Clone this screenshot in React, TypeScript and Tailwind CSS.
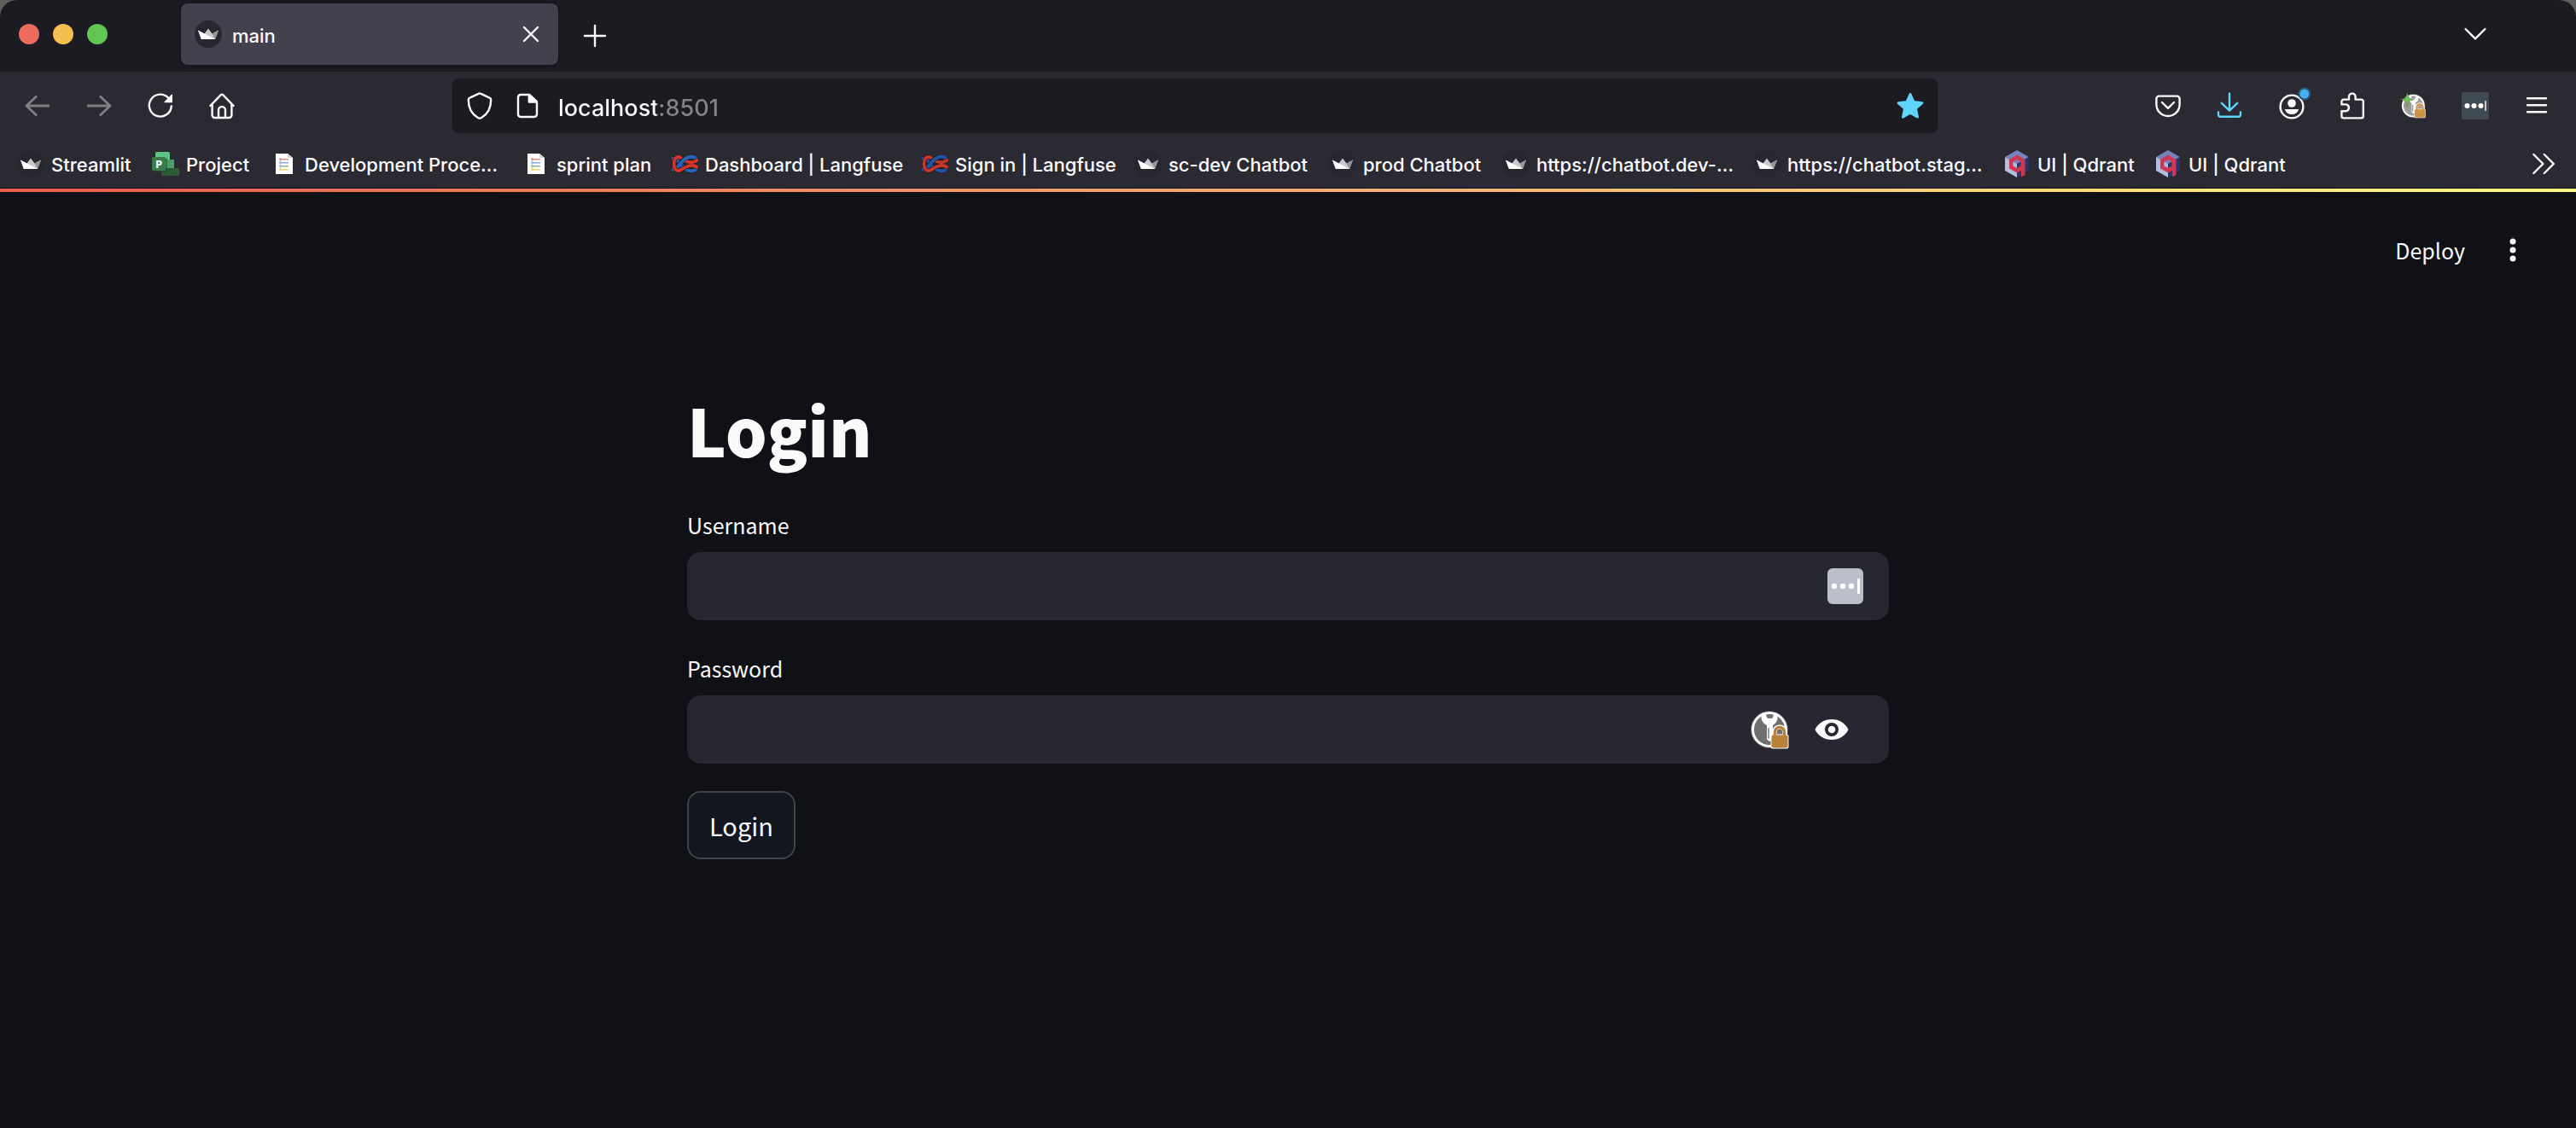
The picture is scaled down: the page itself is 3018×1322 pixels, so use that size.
import React, { useState } from "react";

type IconProps = { className?: string };

const line = {
  fill: "none",
  stroke: "currentColor",
  strokeWidth: 1.4,
  strokeLinecap: "round" as const,
  strokeLinejoin: "round" as const,
};

const Svg16 = ({ className = "size-8", children }: IconProps & { children: React.ReactNode }) => (
  <svg viewBox="0 0 16 16" className={className + " shrink-0 overflow-visible"} aria-hidden="true" {...line}>
    {children}
  </svg>
);

const Crown = () => (
  <svg viewBox="0 0 32 32" className="size-8 shrink-0" aria-hidden="true">
    <circle cx="16" cy="16" r="16" fill="#262730" />
    <path d="M4 11.5 11.5 15.5 16 9.5 20.5 15.5 28 11.5 24 22H8Z" fill="#c9c9cb" />
    <path d="M20.5 15.5 28 11.5 24 22Z" fill="#939398" />
    <path d="M4 11.5 24 22H8.5a.9.9 0 0 1-.8-.5Z" fill="#fff" />
  </svg>
);

const ProjectIcon = () => (
  <svg viewBox="0 0 32 32" className="size-8 shrink-0" aria-hidden="true">
    <rect x="4" y="2" width="17" height="14" rx="1.5" fill="#5fc387" />
    <rect x="15" y="11" width="11" height="14" rx="1" fill="#4a9f68" />
    <rect x="11" y="21" width="21" height="9" rx="1.5" fill="#2b5c36" />
    <rect x="1" y="9" width="17" height="17" rx="1.5" fill="#1f4a2a" opacity=".5" />
    <rect x="0" y="8" width="16" height="16" rx="1.5" fill="#377d48" />
    <text x="8" y="20.5" textAnchor="middle" fill="#fff" fontFamily="Open Sans, sans-serif" fontWeight="700" fontSize="13">
      P
    </text>
  </svg>
);

const DocIcon = () => (
  <svg viewBox="0 0 32 32" className="size-8 shrink-0" aria-hidden="true">
    <path d="M6 4h14l6 5v19H6Z" fill="#fff" />
    <path d="M20 4v5h6Z" fill="#d8d8d8" />
    {["#e0907f", "#8aa6ee", "#86b98c", "#f2cf7a"].map((c, i) => (
      <g key={c} fill={c}>
        <circle cx="11.5" cy={10.5 + i * 4} r="1.5" />
        <rect x="11" y={10 + i * 4} width="10" height="1.5" />
      </g>
    ))}
    <path d="M11.5 12v9" stroke="#b9c3d8" strokeWidth=".8" />
  </svg>
);

const KnotIcon = ({ soft = false }: { soft?: boolean }) => {
  const blue = soft ? "#24509f" : "#2a62b4";
  const red = soft ? "#c7352b" : "#d8352a";
  const blueLoop = "M1 22.500C6 23 9 19 12 15 16 9 21 7.500 25 7.700 28 8 29.500 10 29.500 12M29.500 20C29.500 22 28 24 25 24.300 20 24.500 16 22 13 18 9 12 6 9.500 1 9.500";
  const redLoop = "M31.500 10.500C29 14.500 23 14.500 19 13.500 14 12 13 8 9 8 5 8 3.500 12 3.500 16 3.500 20 5 24 9 24 13 24 14 20.500 19 19 23 17.700 28 17.500 31.500 20.500";
  return (
    <svg viewBox="0 0 32 32" className="size-8 shrink-0" aria-hidden="true" fill="none">
      <path d={blueLoop} stroke="#15161c" strokeWidth="5.500" />
      <path d={blueLoop} stroke={blue} strokeWidth="4.200" />
      <path d={redLoop} stroke="#15161c" strokeWidth="5" />
      <path d={redLoop} stroke={red} strokeWidth="3.800" />
      <path d="M11 16.300C14 11.500 16 9.700 19 8.700" stroke="#15161c" strokeWidth="5.500" />
      <path d="M10.500 17C14 11.500 16 9.700 20 8.400" stroke={blue} strokeWidth="4.200" />
    </svg>
  );
};

const QdrantIcon = () => (
  <svg viewBox="0 0 32 32" className="size-8 shrink-0" aria-hidden="true">
    <path d="M16 0 30 8 16 16 2 8Z" fill="#7584bc" />
    <path d="M2 8 16 16V32L2 24Z" fill="#b3bde1" />
    <path d="M30 8 16 16V32L30 24Z" fill="#2a3567" />
    <path d="M16 5.500 25.500 11V29L21 31.500V24L16 26.500 7 21.500V11Z" fill="#cf3650" />
    <path d="M16 11 20.500 13.500 16 16 11.500 13.500Z" fill="#7584bc" />
    <path d="M11.500 13.500 16 16V21L11.500 18.500Z" fill="#b3bde1" />
    <path d="M20.500 13.500 16 16V21L20.500 18.500Z" fill="#2a3567" />
  </svg>
);

const KeyLock = ({ className = "size-11", spark = false }: IconProps & { spark?: boolean }) => (
  <svg viewBox="0 0 44 44" className={className + " shrink-0 overflow-visible"} aria-hidden="true">
    <circle cx="21" cy="22" r="22" fill="#55555b" />
    <circle cx="21" cy="22" r="19.500" fill={spark ? "#9c9c9c" : "#6f6f6f"} stroke="#fff" strokeWidth="3" />
    <path d="M12 4.500h5.500v2.500a3 3 0 0 0 3 2h2a3 3 0 0 0 3-2V4.500H30c1.500 6-.5 10-5 12.500v16l-4 3-3-2.500V17c-5-2.500-7.500-6.500-6-12.500Z" fill="#fff" />
    <path d="M20 20v12.500" stroke="#777" strokeWidth="1.500" />
    <path d="M27 29v-4a6 6 0 0 1 12 0v4" fill="none" stroke="#fff" strokeWidth="5.500" />
    <rect x="22.500" y="27.500" width="21" height="17" rx="2.500" fill="#fff" />
    <rect x="23.500" y="28.500" width="19" height="15" rx="2" fill={spark ? "#cf9243" : "#b9823a"} />
    <path d="M27.500 30v-5a5.500 5.500 0 0 1 11 0v5" fill="none" stroke={spark ? "#cf9243" : "#b9823a"} strokeWidth="3.500" />
    {spark && (
      <path d="M10-2 13 7.500 22.500 10.500 13 13.500 10 23 7 13.500-2.500 10.500 7 7.500Z" fill="#6fc455" stroke="#35552f" strokeWidth=".6" />
    )}
  </svg>
);

const bookmarks: { label: string; icon: React.ReactNode; width: string }[] = [
  { label: "Streamlit", icon: <Crown />, width: "w-[158px]" },
  { label: "Project", icon: <ProjectIcon />, width: "w-[139px]" },
  { label: "Development Proce…", icon: <DocIcon />, width: "w-[295px]" },
  { label: "sprint plan", icon: <DocIcon />, width: "w-[174px]" },
  { label: "Dashboard | Langfuse", icon: <KnotIcon />, width: "w-[293px]" },
  { label: "Sign in | Langfuse", icon: <KnotIcon soft />, width: "w-[250px]" },
  { label: "sc-dev Chatbot", icon: <Crown />, width: "w-[228px]" },
  { label: "prod Chatbot", icon: <Crown />, width: "w-[203px]" },
  { label: "https://chatbot.dev-…", icon: <Crown />, width: "w-[294px]" },
  { label: "https://chatbot.stag…", icon: <Crown />, width: "w-[293px]" },
  { label: "UI | Qdrant", icon: <QdrantIcon />, width: "w-[177px]" },
  { label: "UI | Qdrant", icon: <QdrantIcon />, width: "w-[177px]" },
];

function ToolButton({ label, children, className = "" }: { label: string; children: React.ReactNode; className?: string }) {
  return (
    <button aria-label={label} className={"flex h-16 w-[72px] shrink-0 items-center justify-center " + className}>
      {children}
    </button>
  );
}

function TabStrip() {
  return (
    <div className="flex h-[84px] items-center rounded-t-[20px] bg-[#1c1b22] pr-[82px] pl-[22px]">
      <div className="mb-1 flex gap-4">
        <button aria-label="Close window" className="size-6 rounded-full bg-[#ed6a5e]" />
        <button aria-label="Minimize window" className="size-6 rounded-full bg-[#f4bf4f]" />
        <button aria-label="Zoom window" className="size-6 rounded-full bg-[#61c554]" />
      </div>
      <div className="mb-1 ml-[86px] flex h-[72px] w-[442px] items-center rounded-lg bg-[#42414d] px-4 shadow-[0_0_4px_rgba(0,0,0,0.5)]">
        <Crown />
        <span className="ml-3 flex-1 pt-1 text-[22px] leading-8">main</span>
        <button aria-label="Close tab" className="flex size-8 items-center justify-center">
          <Svg16>
            <path d="M4 4l8 8M12 4l-8 8" strokeWidth="1.200" />
          </Svg16>
        </button>
      </div>
      <button aria-label="New tab" className="ml-[27px] flex size-8 items-center justify-center">
        <Svg16>
          <path d="M8 2v12M2 8h12" strokeWidth="1.200" />
        </Svg16>
      </button>
      <button aria-label="List all tabs" className="mb-1 ml-auto flex size-[72px] items-center justify-center">
        <Svg16>
          <path d="M2.300 5 8 10.700 13.700 5" strokeWidth="1.200" />
        </Svg16>
      </button>
    </div>
  );
}

function NavBar() {
  const [url, setUrl] = useState("localhost:8501");
  return (
    <div className="flex h-[72px] items-end bg-[#2b2a33] pr-[10px] pl-2">
      <ToolButton label="Back" className="text-[#807f84]">
        <Svg16>
          <path d="M15 8H1.500M7.500 2.200 1.500 8l6 5.800" strokeLinecap="butt" />
        </Svg16>
      </ToolButton>
      <ToolButton label="Forward" className="text-[#807f84]">
        <Svg16>
          <path d="M1 8h13.500M8.500 2.200l6 5.800-6 5.800" strokeLinecap="butt" />
        </Svg16>
      </ToolButton>
      <ToolButton label="Reload">
        <Svg16>
          <path d="M14.400 8.200A6.500 6.500 0 1 1 12.700 3.400" strokeWidth="1.200" />
          <path d="M14.700 1.600v4.200h-4.200Z" fill="currentColor" strokeWidth=".6" />
        </Svg16>
      </ToolButton>
      <ToolButton label="Home">
        <Svg16>
          <path
            d="M1.200 8 7.400 1.600a.9.9 0 0 1 1.200 0L14.800 8M2.300 7v6.500a1.500 1.500 0 0 0 1.500 1.500h8.400a1.500 1.500 0 0 0 1.500-1.500V7M6 15v-4.500a2 2 0 0 1 4 0V15"
            strokeWidth="1.200"
          />
        </Svg16>
      </ToolButton>

      <div className="ml-[234px] flex h-16 flex-1 items-center rounded-lg bg-[#1c1b22] px-4">
        <button aria-label="Tracking protection">
          <Svg16>
            <path
              d="M7.300.900a1.500 1.500 0 0 1 1.400 0L13.800 3.300c.5.200.8.700.8 1.200 0 4.600-2 8.300-5.400 10.400-.7.500-1.700.500-2.400 0C3.400 12.800 1.400 9.100 1.400 4.500c0-.5.3-1 .8-1.200Z"
              strokeWidth="1.200"
            />
          </Svg16>
        </button>
        <button aria-label="Site information" className="ml-6">
          <Svg16>
            <path d="M9 1.500H4A1.600 1.600 0 0 0 2.500 3v10A1.600 1.600 0 0 0 4 14.500h8a1.600 1.600 0 0 0 1.500-1.500V5.700Z" strokeWidth="1.200" />
            <path d="M9 1.700v4h4.300Z" fill="currentColor" />
          </Svg16>
        </button>
        <input
          aria-label="Address"
          value={url}
          onChange={(e) => setUrl(e.target.value)}
          className="ml-5 h-12 min-w-0 flex-1 bg-[linear-gradient(90deg,#fbfbfe_115px,#848388_115px)] bg-clip-text pt-1 text-[27px] font-medium text-transparent caret-white outline-none"
        />
        <button aria-label="Edit this bookmark" className="text-[#5fd5fa]">
          <Svg16>
            <path
              d="M8 1.200 10 5.700 15 6.300 11.300 9.600 12.300 14.600 8 12.100 3.700 14.600 4.700 9.600 1 6.300 6 5.700Z"
              fill="currentColor"
            />
          </Svg16>
        </button>
      </div>

      <div className="ml-[234px] flex">
        <ToolButton label="Save to Pocket">
          <Svg16>
            <path
              d="M2.700 2.300h10.600a1.500 1.500 0 0 1 1.500 1.500V7.200a6.800 6.800 0 0 1-13.600 0V3.800a1.500 1.500 0 0 1 1.500-1.500Z"
              strokeWidth="1.200"
            />
            <path d="M4.500 6 8 9.400 11.500 6" strokeWidth="1.200" />
          </Svg16>
        </ToolButton>
        <ToolButton label="Downloads" className="text-[#5fd5fa]">
          <Svg16>
            <path
              d="M8 .7v10M3.400 6.400 8 10.800l4.600-4.400M1.500 11.700v1.500a1.200 1.200 0 0 0 1.200 1.200h10.600a1.200 1.200 0 0 0 1.200-1.200v-1.500"
              strokeWidth="1.200"
            />
          </Svg16>
        </ToolButton>
        <ToolButton label="Account">
          <Svg16>
            <circle cx="8.500" cy="8.500" r="6.700" strokeWidth="1.200" />
            <circle cx="8.500" cy="6.500" r="2.400" fill="currentColor" stroke="none" />
            <path d="M4.400 10h8.200A4.300 4.300 0 0 1 8.500 13 4.300 4.300 0 0 1 4.400 10Z" fill="currentColor" stroke="none" />
            <circle cx="15.900" cy="1" r="3.800" fill="#2c5a7a" stroke="none" />
            <circle cx="15.900" cy="1" r="2.700" fill="#4baef2" stroke="none" />
          </Svg16>
        </ToolButton>
        <ToolButton label="Extensions">
          <Svg16>
            <path
              d="M2.900 15.200A1.200 1.200 0 0 1 1.700 14v-2.900h2.700a2 2 0 0 0 0-3.900H1.700V5.500a1.200 1.200 0 0 1 1.200-1.200H6V2.700a1.900 1.900 0 0 1 3.800 0v1.600h3.400a1.200 1.200 0 0 1 1.200 1.200V14a1.200 1.200 0 0 1-1.200 1.200Z"
              strokeWidth="1.200"
            />
          </Svg16>
        </ToolButton>
        <ToolButton label="Password manager">
          <KeyLock spark className="size-7" />
        </ToolButton>
        <ToolButton label="Autofill">
          <svg viewBox="0 0 32 32" className="size-8" aria-hidden="true">
            <rect width="32" height="32" rx="3" fill="#3f4a53" />
            <g fill="#fff">
              <circle cx="6.500" cy="16" r="3" />
              <circle cx="14.500" cy="16" r="3" />
              <circle cx="22.500" cy="16" r="3" />
              <rect x="27" y="10" width="2" height="12" opacity=".7" />
            </g>
          </svg>
        </ToolButton>
        <ToolButton label="Menu">
          <Svg16>
            <path d="M2.500 3.600h11M2.500 7.600h11M2.500 11.600h11" strokeWidth="1.200" />
          </Svg16>
        </ToolButton>
      </div>
    </div>
  );
}

function BookmarksBar() {
  return (
    <nav aria-label="Bookmarks" className="flex h-[65px] items-center border-b border-[#0b0b10] bg-[#2b2a33] pt-2 pr-[22px] pl-5">
      {bookmarks.map((b, i) => (
        <a key={i} href="#" className={"flex shrink-0 items-center gap-2 whitespace-nowrap text-[22px] leading-8 " + b.width}>
          {b.icon}
          <span className="pt-0.5">{b.label}</span>
        </a>
      ))}
      <button aria-label="More bookmarks" className="ml-auto">
        <Svg16>
          <path d="M2.200 2.500 7.700 8l-5.500 5.500M8.400 2.500 13.900 8l-5.500 5.500" strokeWidth="1.200" />
        </Svg16>
      </button>
    </nav>
  );
}

const field = "h-20 w-full rounded-2xl bg-[#262730] pl-6 text-[29px] text-[#fafafa] outline-none";

export default function App() {
  const [username, setUsername] = useState("");
  const [password, setPassword] = useState("");
  const [visible, setVisible] = useState(false);

  return (
    <div className="flex min-h-screen flex-col bg-[#101116] font-['Inter',sans-serif] font-medium text-[#fbfbfe]">
      <header className="bg-[#5f5f5c]">
        <TabStrip />
        <NavBar />
        <BookmarksBar />
      </header>

      <main className="flex-1 font-['Noto_Sans_CJK_SC',sans-serif] font-normal text-[#fafafa]">
        <div className="h-1 bg-[linear-gradient(90deg,#eb5b51,#fffb84)]" />
        <div className="flex h-[136px] items-center justify-end pr-[58px]">
          <button className="text-[25px] leading-10">Deploy</button>
          <button aria-label="Main menu" className="ml-10 flex size-8 items-center justify-center">
            <svg viewBox="0 0 32 32" className="size-8" fill="currentColor" aria-hidden="true">
              <circle cx="16" cy="6" r="3.500" />
              <circle cx="16" cy="16" r="3.500" />
              <circle cx="16" cy="26" r="3.500" />
            </svg>
          </button>
        </div>

        <form className="mx-auto max-w-[1408px] pt-[88px]" onSubmit={(e) => e.preventDefault()}>
          <h1 className="text-[77px] leading-[108px] font-black">Login</h1>

          <div className="mt-[38px]">
            <label htmlFor="username" className="block text-[25px] leading-10">
              Username
            </label>
            <div className="relative mt-3">
              <input id="username" type="text" value={username} onChange={(e) => setUsername(e.target.value)} className={field + " pr-20"} />
              <button type="button" aria-label="Fill username" className="absolute inset-y-0 right-[30px] flex items-center">
                <svg viewBox="0 0 42 42" className="size-[42px]" aria-hidden="true">
                  <rect width="42" height="42" rx="6" fill="#babfca" />
                  <g fill="#fff">
                    <circle cx="8" cy="21" r="3.200" />
                    <circle cx="18" cy="21" r="3.200" />
                    <circle cx="28" cy="21" r="3.200" />
                    <rect x="35" y="12" width="3" height="18" rx="1" />
                  </g>
                </svg>
              </button>
            </div>
          </div>

          <div className="mt-9">
            <label htmlFor="password" className="block text-[25px] leading-10">
              Password
            </label>
            <div className="relative mt-3">
              <input
                id="password"
                type={visible ? "text" : "password"}
                value={password}
                onChange={(e) => setPassword(e.target.value)}
                className={field + " pr-44"}
              />
              <div className="absolute inset-y-0 right-[45px] flex items-center gap-7">
                <button type="button" aria-label="Fill password">
                  <KeyLock />
                </button>
                <button type="button" aria-label="Show password" onClick={() => setVisible(!visible)}>
                  <svg viewBox="0 0 44 32" className="h-8 w-11" aria-hidden="true">
                    <path d="M2.500 16C6 8.500 13.500 4 22 4s16 4.500 19.500 12C38 23.500 30.500 28 22 28S6 23.500 2.500 16Z" fill="#fafafa" />
                    <circle cx="22" cy="16" r="8" fill="#262730" />
                    <circle cx="22" cy="16" r="4.300" fill="#fafafa" />
                  </svg>
                </button>
              </div>
            </div>
          </div>

          <button
            type="submit"
            className="mt-8 h-20 rounded-2xl border-2 border-[#41434a] bg-[#131720] px-6 text-[29px] leading-10"
          >
            Login
          </button>
        </form>
      </main>
    </div>
  );
}
